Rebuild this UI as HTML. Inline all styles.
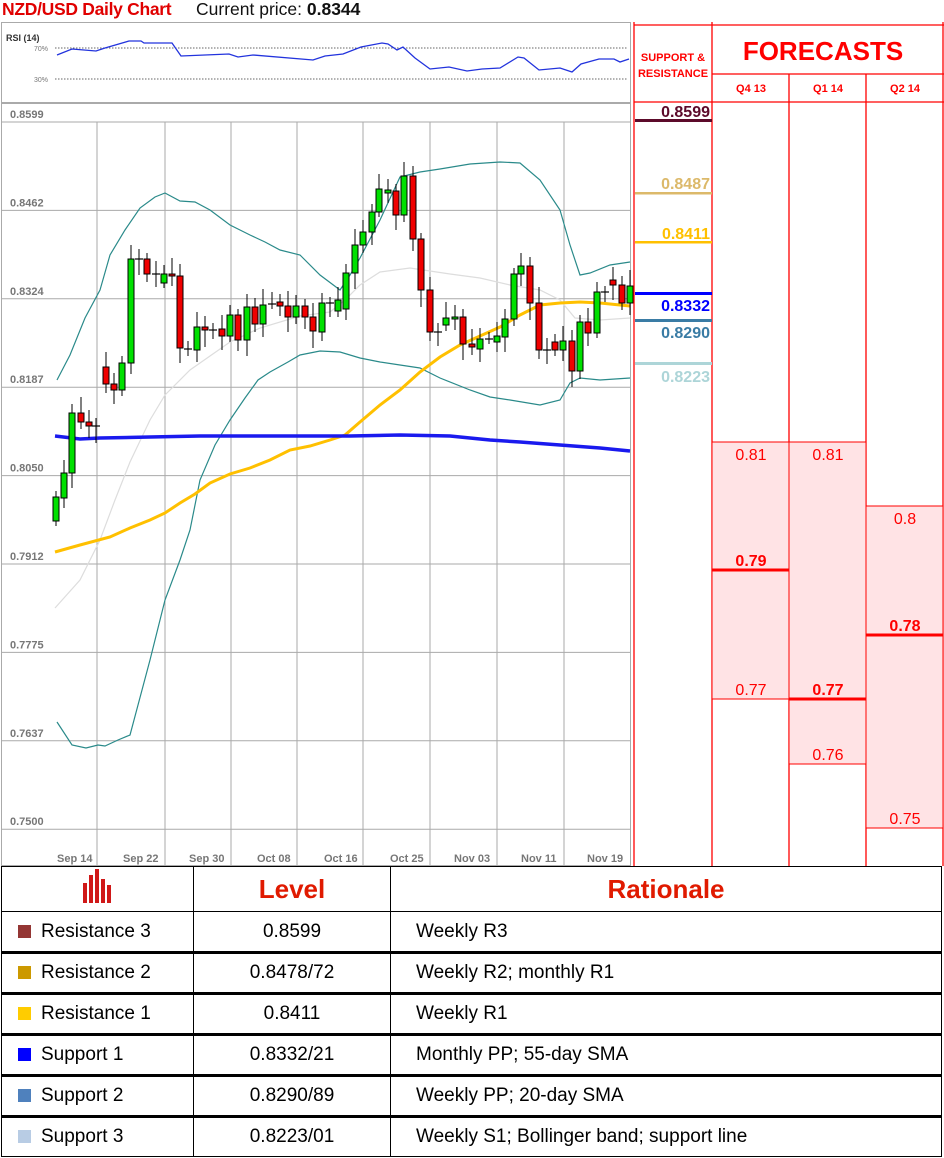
<!DOCTYPE html>
<html><head><meta charset="utf-8"><style>
body{margin:0;background:#fff;width:944px;height:1158px;overflow:hidden;font-family:"Liberation Sans",sans-serif;position:relative}
.t{position:absolute;white-space:nowrap}
table{position:absolute;left:1px;top:866px;width:941px;border-collapse:collapse}
td{border:1px solid #000;height:37px;font-size:19px;padding:0;box-sizing:border-box}
tr.r td{border-bottom:3px solid #000}
.sq{display:inline-block;width:13px;height:13px;margin:0 10px 0 16px;vertical-align:-1px}
</style></head><body>
<div class="t" style="left:2px;top:-1px;font-size:17.5px;font-weight:bold;color:#e00000;letter-spacing:-0.3px">NZD/USD Daily Chart</div>
<div class="t" style="left:196px;top:-1px;font-size:17.5px;color:#111">Current price: <b>0.8344</b></div>
<svg width="944" height="866" style="position:absolute;left:0;top:0" id="s">
<rect x="1.5" y="22.5" width="629" height="80" fill="#fff" stroke="#aaa"/>
<text x="6" y="41" font-size="9" font-weight="bold" fill="#333">RSI (14)</text>
<text x="34" y="51" font-size="7" fill="#777">70%</text>
<text x="34" y="82" font-size="7" fill="#777">30%</text>
<line x1="55" y1="48" x2="628" y2="48" stroke="#666" stroke-dasharray="1.5,1.5"/>
<line x1="55" y1="79" x2="628" y2="79" stroke="#666" stroke-dasharray="1.5,1.5"/>
<polyline fill="none" stroke="#2233dd" stroke-width="1.3" points="57,55 72,49 96,51 105,48 129,41 141,41 144,43 172,43 181,56 229,54 238,57 253,55 313,60 325,56 343,54 361,47 382,43 388,44 397,50 403,47 415,58 430,69 449,67 467,71 482,69 500,68 518,57 524,58 539,70 560,68 572,72 581,64 599,59 614,59 620,62 629,59"/>
<rect x="1.5" y="103.5" width="629" height="762" fill="#fff" stroke="#aaa"/>
<g id="grid" stroke="#aaa" stroke-width="1"></g>
<g font-size="11" font-weight="bold" fill="#777" id="lab"></g>
<g font-size="11" font-weight="bold" fill="#777">
<text x="57" y="862">Sep 14</text><text x="123" y="862">Sep 22</text><text x="189" y="862">Sep 30</text><text x="257" y="862">Oct 08</text><text x="324" y="862">Oct 16</text><text x="390" y="862">Oct 25</text><text x="454" y="862">Nov 03</text><text x="521" y="862">Nov 11</text><text x="587" y="862">Nov 19</text>
</g>
<polyline fill="none" stroke="#ddd" stroke-width="1.2" points="55,608 80,580 100,540 115,500 130,462 150,420 165,395 190,370 230,342 260,328 300,316 330,312 345,300 360,285 380,272 410,268 450,274 480,278 510,285 540,290 560,300 575,318 600,320 630,318"/>
<polyline fill="none" stroke="#2a8a8a" stroke-width="1.2" points="57,722 72,745 86,748 98,745 105,746 118,740 130,735 150,660 165,600 180,560 190,530 200,480 215,445 230,420 245,398 258,380 270,372 288,362 300,355 320,351 340,352 360,358 380,362 400,365 420,368 440,378 470,390 490,397 510,400 540,405 560,400 570,383 580,378 600,380 630,378"/>
<polyline fill="none" stroke="#2a8a8a" stroke-width="1.2" points="57,380 70,355 85,318 100,290 110,255 125,230 140,208 155,197 165,193 180,201 195,202 210,210 230,225 250,235 265,242 280,250 300,255 320,275 340,290 350,275 360,258 380,220 400,177 420,172 440,169 470,164 500,162 520,163 540,180 560,210 570,245 580,275 590,273 610,265 630,262"/>
<polyline fill="none" stroke="#ffc000" stroke-width="3" points="55,552 80,545 110,537 130,528 150,520 165,513 180,503 195,494 210,483 230,474 250,468 270,460 290,450 310,446 330,440 345,435 360,422 380,405 400,390 420,372 440,357 460,345 480,336 500,327 520,315 540,305 560,303 580,302 600,303 620,305 630,306"/>
<polyline fill="none" stroke="#1a1aee" stroke-width="3.5" points="55,436 80,439 100,438 150,437 200,436 250,436 300,436 350,436 400,435 450,436 490,440 520,442 560,445 600,448 630,451"/>
<g id="c"></g>
<g stroke="#f00" stroke-width="1.3" fill="none">
<line x1="634" y1="22" x2="634" y2="866"/>
<line x1="712" y1="22" x2="712" y2="866"/>
<line x1="789" y1="74" x2="789" y2="866"/>
<line x1="866" y1="74" x2="866" y2="866"/>
<line x1="943" y1="22" x2="943" y2="866"/>
<line x1="634" y1="25" x2="944" y2="25"/>
<line x1="712" y1="74" x2="944" y2="74"/>
<line x1="634" y1="102" x2="944" y2="102"/>
</g>
<rect x="712" y="442" width="77" height="257" fill="#ffe3e5" stroke="#f00"/>
<rect x="789" y="442" width="77" height="322" fill="#ffe3e5" stroke="#f00"/>
<rect x="866" y="506" width="77" height="322" fill="#ffe3e5" stroke="#f00"/>
<rect x="712" y="568.5" width="77" height="3" fill="#f00"/>
<rect x="789" y="697.5" width="77" height="3" fill="#f00"/>
<rect x="866" y="633.5" width="77" height="3" fill="#f00"/>
<g font-size="16" fill="#f00" text-anchor="middle">
<text x="751" y="460">0.81</text><text x="828" y="460">0.81</text><text x="905" y="524">0.8</text>
<text x="751" y="566" font-weight="bold">0.79</text><text x="905" y="631" font-weight="bold">0.78</text>
<text x="751" y="695">0.77</text><text x="828" y="695" font-weight="bold">0.77</text>
<text x="828" y="760">0.76</text><text x="905" y="824">0.75</text>
</g>
<g font-size="11" font-weight="bold" fill="#f00" text-anchor="middle">
<text x="673" y="61">SUPPORT &amp;</text><text x="673" y="77">RESISTANCE</text>
<text x="751" y="92">Q4 13</text><text x="828" y="92">Q1 14</text><text x="905" y="92">Q2 14</text>
</g>
<text x="823" y="60" font-size="26" font-weight="bold" fill="#f00" text-anchor="middle">FORECASTS</text>
<g font-size="16" font-weight="bold" text-anchor="end">
<text x="710" y="117" fill="#5c0a2a">0.8599</text>
<rect x="635" y="119" width="77" height="3" fill="#5c0a2a"/>
<text x="710" y="189" fill="#dcb96a">0.8487</text>
<rect x="635" y="192" width="77" height="2.5" fill="#dcb96a"/>
<text x="710" y="239" fill="#ffc000">0.8411</text>
<rect x="635" y="241" width="77" height="2.5" fill="#ffc000"/>
<rect x="635" y="292" width="77" height="3" fill="#0000ff"/>
<text x="710" y="311" fill="#0000ff">0.8332</text>
<rect x="635" y="319" width="77" height="3" fill="#3a7ca5"/>
<text x="710" y="338" fill="#3a7ca5">0.8290</text>
<rect x="635" y="362" width="77" height="3" fill="#add5d8"/>
<text x="710" y="382" fill="#add5d8">0.8223</text>
</g>
</svg>
<table>
<tr style="height:45px"><td style="width:192px;height:45px;text-align:center"><svg width="36" height="34" viewBox="0 0 36 34"><g fill="#d01818"><rect x="3" y="14" width="4" height="20"/><rect x="9" y="6" width="4" height="28"/><rect x="15" y="0" width="4" height="34"/><rect x="21" y="10" width="4" height="24"/><rect x="27" y="16" width="4" height="18"/></g></svg></td>
<td style="width:197px;text-align:center;font-size:26px;font-weight:bold;color:#e01a00">Level</td>
<td style="text-align:center;font-size:26px;font-weight:bold;color:#e01a00">Rationale</td></tr>
<tr class="r"><td style="height:41px"><span class="sq" style="background:#943634"></span>Resistance 3</td><td style="text-align:center">0.8599</td><td style="padding-left:25px">Weekly R3</td></tr>
<tr class="r"><td style="height:41px"><span class="sq" style="background:#cc9900"></span>Resistance 2</td><td style="text-align:center">0.8478/72</td><td style="padding-left:25px">Weekly R2; monthly R1</td></tr>
<tr class="r"><td style="height:41px"><span class="sq" style="background:#ffcc00"></span>Resistance 1</td><td style="text-align:center">0.8411</td><td style="padding-left:25px">Weekly R1</td></tr>
<tr class="r"><td style="height:41px"><span class="sq" style="background:#0000ff"></span>Support 1</td><td style="text-align:center">0.8332/21</td><td style="padding-left:25px">Monthly PP; 55-day SMA</td></tr>
<tr class="r"><td style="height:41px"><span class="sq" style="background:#4f81bd"></span>Support 2</td><td style="text-align:center">0.8290/89</td><td style="padding-left:25px">Weekly PP; 20-day SMA</td></tr>
<tr><td style="height:40px"><span class="sq" style="background:#b8cce4"></span>Support 3</td><td style="text-align:center">0.8223/01</td><td style="padding-left:25px">Weekly S1; Bollinger band; support line</td></tr>
</table>
<script>
var NS="http://www.w3.org/2000/svg";
function el(p,n,a){var e=document.createElementNS(NS,n);for(var k in a)e.setAttribute(k,a[k]);p.appendChild(e);return e;}
var g=document.getElementById("grid"),lab=document.getElementById("lab");
[97,165,231,297,363,430,497,564].forEach(function(x){el(g,"line",{x1:x,y1:122,x2:x,y2:866});});
var ps=["0.8599","0.8462","0.8324","0.8187","0.8050","0.7912","0.7775","0.7637","0.7500"];
ps.forEach(function(p,i){var y=122+i*88.4;el(g,"line",{x1:2,y1:y,x2:630,y2:y});var t=el(lab,"text",{x:10,y:y-4});t.textContent=p;});
var d=[[56,497,521,1],[64,473,498,1],[72,413,473,1],[81,413,422,0],[89,422,426,0],[96,426,426,2],[106,367,384,0],[114,384,390,0],[122,363,390,1],[131,259,363,1],[139,259,259,2],[147,259,274,0],[156,274,274,2],[164,274,283,1],[172,274,276,0],[180,276,348,0],[188,349,349,2],[197,327,350,1],[205,327,330,0],[213,330,330,2],[222,329,336,0],[230,315,336,1],[238,315,340,0],[247,307,340,1],[255,307,324,0],[263,305,324,1],[272,304,304,2],[280,302,306,0],[288,306,317,0],[296,306,317,1],[305,306,317,0],[313,317,331,0],[322,303,332,1],[330,303,303,2],[338,300,311,1],[346,273,309,1],[355,245,273,1],[363,232,245,1],[372,212,232,1],[379,189,212,1],[388,190,193,1],[396,191,215,0],[404,176,215,1],[413,176,239,0],[421,239,290,0],[430,290,332,0],[438,332,332,2],[446,318,325,1],[455,317,319,1],[463,317,344,0],[472,344,347,0],[480,339,349,1],[489,339,339,2],[497,336,342,1],[505,319,337,1],[514,274,319,1],[521,266,274,1],[530,266,303,0],[539,303,350,0],[547,350,350,2],[555,342,350,0],[563,341,350,1],[572,341,371,0],[580,322,371,1],[588,322,333,0],[597,292,333,1],[605,292,292,2],[613,280,285,0],[622,285,303,0],[630,286,303,1]];
var c=document.getElementById("c");
d.forEach(function(a,i){var x=a[0],t=a[1],b=a[2],k=a[3];var w1=6+(i*7%11),w2=5+(i*5%13);
el(c,"line",{x1:x,y1:t-w1,x2:x,y2:b+w2,stroke:"#000","stroke-width":1});
if(k==2){el(c,"line",{x1:x-4,y1:t,x2:x+4,y2:t,stroke:"#000","stroke-width":1.2});}
else el(c,"rect",{x:x-3,y:t,width:6,height:Math.max(b-t,2),fill:k?"#00e000":"#f00000",stroke:"#000","stroke-width":1});});
</script>
</body></html>
